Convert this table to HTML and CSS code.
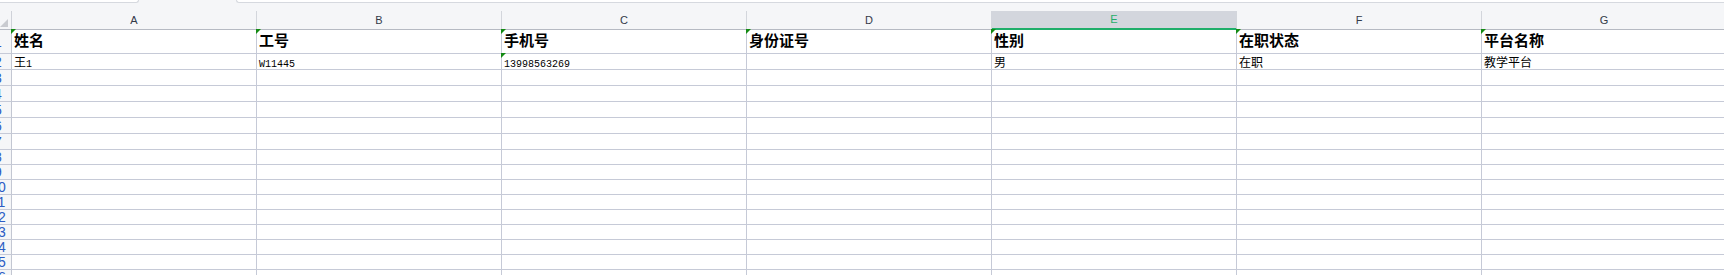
FILE: index.html
```html
<!DOCTYPE html>
<html lang="zh-CN">
<head>
<meta charset="utf-8">
<title>Sheet</title>
<link rel="stylesheet" href="styles.css">
</head>
<body>
<div class="app">
  <div class="topstrip">
    <div class="ear ear-left"></div>
    <div class="tabgap"></div>
    <div class="ear ear-right"></div>
  </div>
  <div class="sheet">
    <div class="corner"><span class="corner-tri"></span></div>
    <div class="colhead">A</div>
    <div class="colhead">B</div>
    <div class="colhead">C</div>
    <div class="colhead">D</div>
    <div class="colhead sel">E</div>
    <div class="colhead">F</div>
    <div class="colhead">G</div>

    <div class="rowhead"><span>1</span></div>
    <div class="cell head mark">姓名</div>
    <div class="cell head mark">工号</div>
    <div class="cell head mark">手机号</div>
    <div class="cell head mark">身份证号</div>
    <div class="cell head mark">性别</div>
    <div class="cell head mark">在职状态</div>
    <div class="cell head mark">平台名称</div>

    <div class="rowhead"><span>2</span></div>
    <div class="cell data">王<span class="num">1</span></div>
    <div class="cell data"><span class="num">W11445</span></div>
    <div class="cell data mark"><span class="num">13998563269</span></div>
    <div class="cell data"></div>
    <div class="cell data">男</div>
    <div class="cell data">在职</div>
    <div class="cell data">教学平台</div>

    <div class="rowhead"><span>3</span></div><div class="cell"></div><div class="cell"></div><div class="cell"></div><div class="cell"></div><div class="cell"></div><div class="cell"></div><div class="cell"></div>
    <div class="rowhead"><span>4</span></div><div class="cell"></div><div class="cell"></div><div class="cell"></div><div class="cell"></div><div class="cell"></div><div class="cell"></div><div class="cell"></div>
    <div class="rowhead"><span>5</span></div><div class="cell"></div><div class="cell"></div><div class="cell"></div><div class="cell"></div><div class="cell"></div><div class="cell"></div><div class="cell"></div>
    <div class="rowhead"><span>6</span></div><div class="cell"></div><div class="cell"></div><div class="cell"></div><div class="cell"></div><div class="cell"></div><div class="cell"></div><div class="cell"></div>
    <div class="rowhead"><span>7</span></div><div class="cell"></div><div class="cell"></div><div class="cell"></div><div class="cell"></div><div class="cell"></div><div class="cell"></div><div class="cell"></div>
    <div class="rowhead"><span>8</span></div><div class="cell"></div><div class="cell"></div><div class="cell"></div><div class="cell"></div><div class="cell"></div><div class="cell"></div><div class="cell"></div>
    <div class="rowhead"><span>9</span></div><div class="cell"></div><div class="cell"></div><div class="cell"></div><div class="cell"></div><div class="cell"></div><div class="cell"></div><div class="cell"></div>
    <div class="rowhead"><span>10</span></div><div class="cell"></div><div class="cell"></div><div class="cell"></div><div class="cell"></div><div class="cell"></div><div class="cell"></div><div class="cell"></div>
    <div class="rowhead"><span>11</span></div><div class="cell"></div><div class="cell"></div><div class="cell"></div><div class="cell"></div><div class="cell"></div><div class="cell"></div><div class="cell"></div>
    <div class="rowhead"><span>12</span></div><div class="cell"></div><div class="cell"></div><div class="cell"></div><div class="cell"></div><div class="cell"></div><div class="cell"></div><div class="cell"></div>
    <div class="rowhead"><span>13</span></div><div class="cell"></div><div class="cell"></div><div class="cell"></div><div class="cell"></div><div class="cell"></div><div class="cell"></div><div class="cell"></div>
    <div class="rowhead"><span>14</span></div><div class="cell"></div><div class="cell"></div><div class="cell"></div><div class="cell"></div><div class="cell"></div><div class="cell"></div><div class="cell"></div>
    <div class="rowhead"><span>15</span></div><div class="cell"></div><div class="cell"></div><div class="cell"></div><div class="cell"></div><div class="cell"></div><div class="cell"></div><div class="cell"></div>
    <div class="rowhead"><span>16</span></div><div class="cell"></div><div class="cell"></div><div class="cell"></div><div class="cell"></div><div class="cell"></div><div class="cell"></div><div class="cell"></div>
  </div>
</div>
</body>
</html>
```

FILE: styles.css
```css
* { box-sizing: border-box; }
html, body {
  margin: 0;
  padding: 0;
  background: #ffffff;
  overflow: hidden;
}
body {
  width: 1724px;
  height: 275px;
  font-family: "Noto Sans CJK SC", "Liberation Sans", sans-serif;
}
.app {
  width: 1724px;
  height: 275px;
  overflow: hidden;
}
.topstrip {
  height: 11px;
  background: #f5f6f8;
  display: flex;
  align-items: flex-start;
}
.ear {
  height: 3px;
  background: #ffffff;
  border-bottom: 1px solid #d6d9df;
}
.ear-left {
  width: 139px;
  border-right: 1px solid #d6d9df;
  border-bottom-right-radius: 4px;
}
.tabgap {
  width: 97px;
}
.ear-right {
  flex: 1;
  border-left: 1px solid #d6d9df;
  border-bottom-left-radius: 4px;
}
.sheet {
  display: grid;
  grid-template-columns: 12px repeat(7, 245px);
  grid-template-rows: 19px 24px repeat(6, 16px) repeat(9, 15px);
  width: 1727px;
}
.corner {
  position: relative;
  background: #f5f6f8;
  border-right: 1px solid #cfd2d9;
  border-bottom: 1px solid #b6bac3;
}
.corner-tri {
  position: absolute;
  left: 0;
  bottom: 2px;
  width: 0;
  height: 0;
  border-left: 8px solid transparent;
  border-bottom: 8px solid #c9cbd0;
}
.colhead {
  background: #f5f6f8;
  border-right: 1px solid #d3d6dc;
  border-bottom: 1px solid #b6bac3;
  font-family: "Liberation Sans", "DejaVu Sans", sans-serif;
  font-size: 11px;
  line-height: 18px;
  color: #333a48;
  text-align: center;
}
.colhead.sel {
  background: #d3d6dd;
  color: #1fae6a;
  border-bottom: 2px solid #1fae6a;
  line-height: 17px;
  box-shadow: -1px 0 0 #d3d6dd;
}
.rowhead {
  background: #f5f6f8;
  border-right: 1px solid #c3c7d2;
  border-bottom: 1px solid #c6cad7;
  overflow: hidden;
  font-family: "Liberation Sans", "DejaVu Sans", sans-serif;
  font-size: 14px;
  color: #2b5cc4;
  display: flex;
  align-items: center;
}
.rowhead span {
  display: block;
  flex: none;
  width: 30px;
  margin-left: -17px;
  text-align: center;
  line-height: 14px;
}
.cell {
  position: relative;
  border-right: 1px solid #c6cad7;
  border-bottom: 1px solid #c6cad7;
  padding-left: 2px;
  white-space: nowrap;
  color: #000000;
}
.cell.head {
  font-size: 15px;
  font-weight: 700;
  line-height: 19px;
}
.cell.data {
  font-size: 12px;
  line-height: 15px;
}
.num {
  font-family: "Liberation Mono", "DejaVu Sans Mono", monospace;
  font-size: 10px;
}
.cell.mark::before {
  content: "";
  position: absolute;
  left: -1px;
  top: -1px;
  width: 0;
  height: 0;
  border-top: 5px solid #138a13;
  border-right: 5px solid transparent;
}
```
